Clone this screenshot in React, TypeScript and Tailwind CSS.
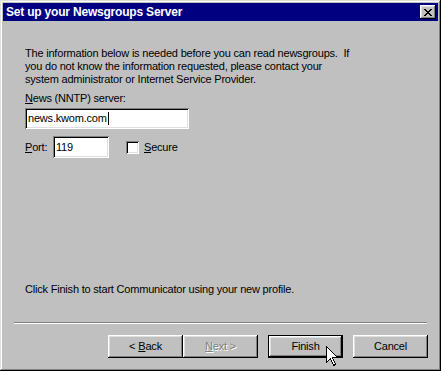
import React from "react";

const font = { fontFamily: '"Liberation Sans", Arial, sans-serif' };

const raised =
  "shadow-[inset_-1px_-1px_#000,inset_1px_1px_#fff,inset_-2px_-2px_#808080,inset_2px_2px_#dfdfdf]";
const sunken =
  "shadow-[inset_1px_1px_#808080,inset_-1px_-1px_#fff,inset_2px_2px_#000,inset_-2px_-2px_#dfdfdf]";

function Btn({ children, def, disabled, className = "" }: { children: React.ReactNode; def?: boolean; disabled?: boolean; className?: string }) {
  const inner = (
    <div
      className={`flex h-full w-full items-center justify-center bg-[#c0c0c0] text-[11px] ${raised} ${
        disabled ? "text-[#808080] [text-shadow:1px_1px_#fff]" : "text-black"
      }`}
    >
      {children}
    </div>
  );
  if (def)
    return <div className={`h-[23px] w-[75px] border border-black ${className}`}>{inner}</div>;
  return <div className={`h-[23px] w-[75px] ${className}`}>{inner}</div>;
}

export default function App() {
  return (
    <div
      className={`relative flex h-[371px] w-[441px] flex-col bg-[#c0c0c0] p-[3px] text-black shadow-[inset_-1px_-1px_#000,inset_1px_1px_#dfdfdf,inset_-2px_-2px_#808080,inset_2px_2px_#fff]`}
      style={font}
    >
      {/* title bar */}
      <div className="flex h-[18px] items-center justify-between bg-[#000080] pl-[3px] pr-[2px]">
        <span className="text-[12px] font-bold leading-none tracking-[-0.2px] text-white">
          Set up your Newsgroups Server
        </span>
        <div className={`flex h-[14px] w-[16px] items-center justify-center bg-[#c0c0c0] ${raised}`}>
          <svg width="8" height="7" viewBox="0 0 8 7" shapeRendering="crispEdges">
            <path
              d="M0 0h2v1H0zM6 0h2v1H6zM1 1h2v1H1zM5 1h2v1H5zM2 2h4v1H2zM3 3h2v1H3zM2 4h4v1H2zM1 5h2v1H1zM5 5h2v1H5zM0 6h2v1H0zM6 6h2v1H6z"
              fill="#000"
            />
          </svg>
        </div>
      </div>

      {/* body */}
      <div className="flex flex-1 flex-col text-[11px] leading-[13px] tracking-[-0.2px]">
        <div className="pl-[22px] pt-[26px]">
          <p>
            The information below is needed before you can read newsgroups.&nbsp; If
            <br />
            you do not know the information requested, please contact your
            <br />
            system administrator or Internet Service Provider.
          </p>
          <div className="mt-[6px]">
            <span className="underline">N</span>ews (NNTP) server:
          </div>
          <div className={`mt-[3px] flex h-[21px] w-[164px] items-center bg-white pl-[3px] ${sunken}`}>
            <span>news.kwom.com</span>
            <span className="ml-px h-[13px] w-px bg-black" />
          </div>
          <div className="mt-[7px] flex items-center">
            <span className="w-[28px]">
              <span className="underline">P</span>ort:
            </span>
            <div className={`flex h-[22px] w-[56px] items-center bg-white pl-[3px] ${sunken}`}>119</div>
            <div className={`ml-[17px] h-[13px] w-[13px] bg-white ${sunken}`} />
            <span className="ml-[5px]">
              <span className="underline">S</span>ecure
            </span>
          </div>
        </div>
        <div className="flex-1" />
        <div className="pb-[26px] pl-[22px]">Click Finish to start Communicator using your new profile.</div>
        <div className="mx-[11px] h-[2px] border-t border-b border-t-[#808080] border-b-white" />
        <div className="flex pb-[10px] pl-[105px] pt-[11px]">
          <Btn>
            &lt; <span className="ml-[3px] underline">B</span>ack
          </Btn>
          <Btn disabled>
            <span className="underline">N</span>ext &gt;
          </Btn>
          <Btn def className="ml-[10px]">
            Finish
          </Btn>
          <Btn className="ml-[10px]">Cancel</Btn>
        </div>
      </div>

      {/* mouse cursor */}
      <svg
        className="absolute left-[326px] top-[346px]"
        width="13"
        height="21"
        viewBox="0 0 13 21"
        shapeRendering="crispEdges"
      >
        <polygon
          points="0.5,0.5 0.5,16.5 4.5,12.5 7.5,19.5 9.5,18.5 6.5,11.5 11.5,11.5"
          fill="#fff"
          stroke="#000"
          strokeWidth="1"
        />
      </svg>
    </div>
  );
}
